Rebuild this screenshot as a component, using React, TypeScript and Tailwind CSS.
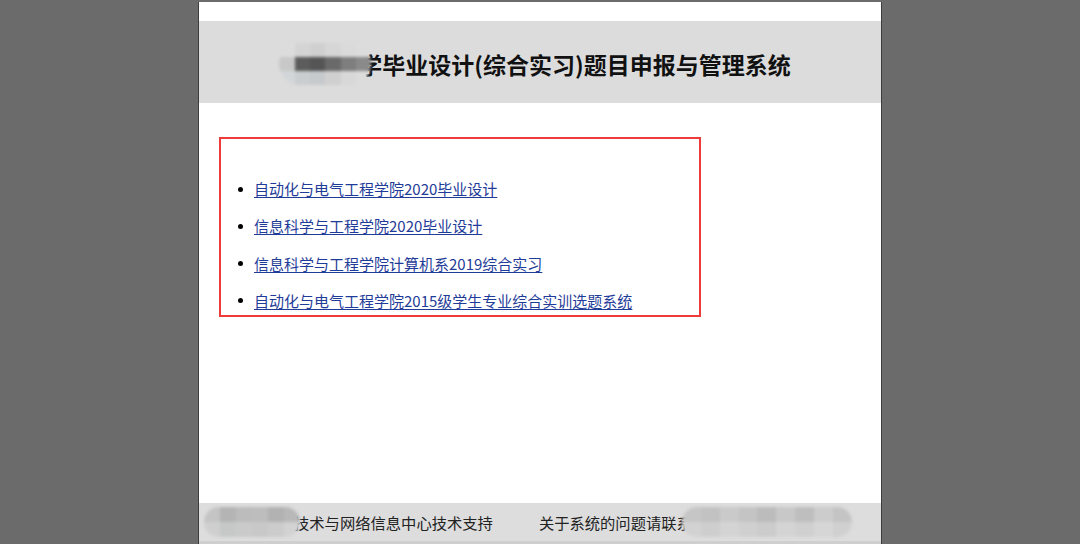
const links = [
   '自动化与电气工程学院2020毕业设计',
   '信息科学与工程学院2020毕业设计',
   '信息科学与工程学院计算机系2019综合实习',
   '自动化与电气工程学院2015级学生专业综合实训选题系统',
];

type BlurProps = {
   rows: string[][];
   className: string;
};

// pixelated, smudged block used where the original screenshot is redacted
const Blur = ({ rows, className }: BlurProps) => {
   return (
      <div
         className={`relative z-10 flex flex-col overflow-hidden rounded-full blur-[1.5px] ${className}`}
      >
         {rows.map((row, i) => (
            <div key={i} className="flex flex-1">
               {row.map((c, j) => (
                  <div key={j} className="flex-1" style={{ backgroundColor: c }} />
               ))}
            </div>
         ))}
      </div>
   );
};

const titleBlur = [
   ['#dcdcdc', '#d4d4d4', '#d0d0d0', '#d6d6d6', '#dadada', '#dcdcdc'],
   ['#c8c8c8', '#5c5c5c', '#555555', '#6a6a6a', '#7e7e7e', '#8a8a8a'],
   ['#d2d6d8', '#c9cdd0', '#c6cacd', '#d0d0d0', '#d8d8d8', '#dcdcdc'],
];

const leftFooterBlur = [
   ['#c4c4c4', '#b4b4b4', '#bcbcbc', '#bdbdbd', '#b2b2b2', '#b8b8b8'],
   ['#cfcfcf', '#c6c8c8', '#cacaca', '#c8c8c8', '#cccccc', '#d2d2d2'],
];

const rightFooterBlur = [
   ['#c6c6c6', '#c2c2c2', '#cacaca', '#c4c4c4', '#bcbcbc', '#c8c8c8', '#bebebe', '#cccccc', '#c4c4c4'],
   ['#d2d2d2', '#cecece', '#d4d4d4', '#d0d0d0', '#cccccc', '#d4d4d4', '#d0d0d0', '#d6d6d6', '#d0d0d0'],
];

const App = () => {
   return (
      <div
         className="flex h-[544px] w-full justify-center bg-[#6b6b6b] pt-[2px]"
         style={{ fontFamily: '"Noto Sans CJK SC", "Liberation Sans", sans-serif' }}
      >
         <div className="flex w-[684px] flex-col border-x border-x-[#3c3c3c] bg-white">
            <div className="h-[19px]" />
            <div className="flex h-[82px] items-center justify-center bg-[#dcdcdc] pr-[10px] pt-[4px]">
               <Blur rows={titleBlur} className="h-[42px] w-[92px]" />
               <h1 className="ml-[-12px] text-[23px] font-bold text-[#111]">
                  学毕业设计(综合实习)题目申报与管理系统
               </h1>
            </div>
            <div className="flex-1">
               <div className="ml-[20px] mt-[34px] flex h-[180px] w-[482px] flex-col gap-[15.3px] border-2 border-[#ee3b3b] pt-[39px]">
                  {links.map((link) => (
                     <div key={link} className="flex h-[22px] items-center">
                        <span className="ml-[17px] h-[5px] w-[5px] rounded-full bg-black" />
                        <a
                           href="#"
                           className="ml-[11px] text-[15px] leading-[22px] text-[#1f3c98] underline underline-offset-2"
                        >
                           {link}
                        </a>
                     </div>
                  ))}
               </div>
            </div>
            <div className="flex h-[38px] items-center bg-[#dddddd] text-[15.3px] text-[#222]">
               <Blur rows={leftFooterBlur} className="ml-[5px] h-[30px] w-[96px]" />
               <span className="ml-[-6px]">技术与网络信息中心技术支持</span>
               <span className="ml-[46px]">关于系统的问题请联系</span>
               <Blur rows={rightFooterBlur} className="ml-[-10px] h-[30px] w-[170px]" />
            </div>
            <div className="h-[3px] bg-[#cfcfcf]" />
         </div>
      </div>
   );
};

export default App;
